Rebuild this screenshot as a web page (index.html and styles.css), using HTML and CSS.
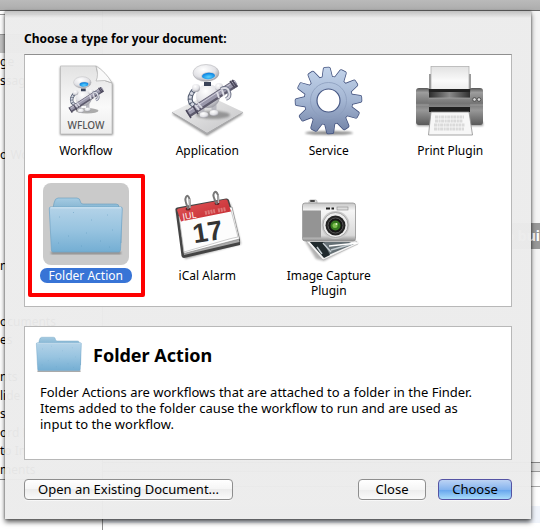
FILE: index.html
```html
<!DOCTYPE html>
<html lang="en">
<head>
    <meta charset="UTF-8">
    <meta name="viewport" content="width=device-width, initial-scale=1.0">
    <title>Automator</title>
    <link rel="stylesheet" href="styles.css">
</head>
<body>
    <!-- shared icon parts -->
    <svg class="defs" width="0" height="0" aria-hidden="true">
        <defs>
            <linearGradient id="paper" x1="0" y1="0" x2="0" y2="1">
                <stop offset="0" stop-color="#e2e2e2"/><stop offset=".6" stop-color="#fafafa"/><stop offset="1" stop-color="#ececec"/>
            </linearGradient>
            <linearGradient id="base" x1="0" y1="0" x2="1" y2="1">
                <stop offset="0" stop-color="#f2f2f2"/><stop offset="1" stop-color="#c4c4c6"/>
            </linearGradient>
            <radialGradient id="shell" cx=".4" cy=".3" r=".75">
                <stop offset="0" stop-color="#ffffff"/><stop offset=".6" stop-color="#e2e2e6"/><stop offset="1" stop-color="#96969e"/>
            </radialGradient>
            <radialGradient id="eye" cx=".5" cy=".65" r=".6">
                <stop offset="0" stop-color="#5ad4ff"/><stop offset="1" stop-color="#087fe0"/>
            </radialGradient>
            <linearGradient id="folderFront" x1="0" y1="0" x2="0" y2="1">
                <stop offset="0" stop-color="#b4d3e8"/><stop offset=".5" stop-color="#98c4e0"/><stop offset="1" stop-color="#74aed3"/>
            </linearGradient>
            <linearGradient id="folderBack" x1="0" y1="0" x2="0" y2="1">
                <stop offset="0" stop-color="#a5cbe2"/><stop offset=".4" stop-color="#6fa6c8"/>
            </linearGradient>
            <linearGradient id="steel" gradientUnits="userSpaceOnUse" x1="0" y1="10" x2="0" y2="76">
                <stop offset="0" stop-color="#c2d3ea"/><stop offset=".5" stop-color="#a3b5d2"/><stop offset="1" stop-color="#7080a4"/>
            </linearGradient>
            <linearGradient id="printer" x1="0" y1="0" x2="0" y2="1">
                <stop offset="0" stop-color="#575757"/><stop offset=".12" stop-color="#9d9d9d"/><stop offset=".4" stop-color="#757575"/><stop offset=".6" stop-color="#989898"/><stop offset="1" stop-color="#5a5a5a"/>
            </linearGradient>
            <linearGradient id="glass" x1="0" y1="0" x2="1" y2="0">
                <stop offset="0" stop-color="#2c2c2c"/><stop offset=".5" stop-color="#8a8a8a"/><stop offset="1" stop-color="#303030"/>
            </linearGradient>
            <linearGradient id="red" x1="0" y1="0" x2="1" y2="1">
                <stop offset="0" stop-color="#e2595a"/><stop offset="1" stop-color="#c2262d"/>
            </linearGradient>
            <linearGradient id="silver" x1="0" y1="0" x2="0" y2="1">
                <stop offset="0" stop-color="#c5c5c5"/><stop offset=".2" stop-color="#f6f6f6"/><stop offset=".85" stop-color="#d9d9d9"/><stop offset="1" stop-color="#8f8f8f"/>
            </linearGradient>
            <filter id="soft" x="-20%" y="-50%" width="140%" height="200%"><feGaussianBlur stdDeviation="1"/></filter>
            <path id="tooth" d="M37.5 20 39.3 10.5Q39.5 9.5 40.5 9.5H44.5Q45.5 9.5 45.7 10.5L47.5 20Z"/>
            <clipPath id="gear">
                <circle cx="42.5" cy="42.5" r="24"/>
                <use href="#tooth" transform="rotate(-3 42.5 42.5)"/>
                <use href="#tooth" transform="rotate(27 42.5 42.5)"/>
                <use href="#tooth" transform="rotate(57 42.5 42.5)"/>
                <use href="#tooth" transform="rotate(87 42.5 42.5)"/>
                <use href="#tooth" transform="rotate(117 42.5 42.5)"/>
                <use href="#tooth" transform="rotate(147 42.5 42.5)"/>
                <use href="#tooth" transform="rotate(177 42.5 42.5)"/>
                <use href="#tooth" transform="rotate(207 42.5 42.5)"/>
                <use href="#tooth" transform="rotate(237 42.5 42.5)"/>
                <use href="#tooth" transform="rotate(267 42.5 42.5)"/>
                <use href="#tooth" transform="rotate(297 42.5 42.5)"/>
                <use href="#tooth" transform="rotate(327 42.5 42.5)"/>
            </clipPath>
        </defs>
        <symbol id="robot" viewBox="0 0 86 82">
            <ellipse cx="49" cy="57" rx="17" ry="4" fill="#000" opacity=".3" filter="url(#soft)"/>
            <path d="M38 47V55M50 47V54" stroke="#b9b9c0" stroke-width="5"/>
            <ellipse cx="40" cy="57" rx="4.5" ry="3" fill="url(#shell)"/>
            <ellipse cx="50" cy="55" rx="4.5" ry="3" fill="url(#shell)"/>
            <path d="M31 31Q24 38 27 45L33 50" fill="none" stroke="#555e72" stroke-width="5"/>
            <path d="M31 31Q24 38 27 45L33 50" fill="none" stroke="#d5d8e2" stroke-width="3" stroke-dasharray="3 1"/>
            <ellipse cx="44" cy="38" rx="12" ry="12" fill="url(#shell)"/>
            <circle cx="32" cy="30" r="4" fill="url(#shell)"/>
            <circle cx="55" cy="29" r="4" fill="url(#shell)"/>
            <path d="M40 24H47V28H40Z" fill="#3a4358"/>
            <path d="M24 56 72 25" stroke="#5d5a6c" stroke-width="8"/>
            <path d="M24 55 72 24" stroke="#9a98ab" stroke-width="5"/>
            <path d="M25 53 71 23" stroke="#cfcddb" stroke-width="1"/>
            <path d="M66 23 71 30M68 22 73 29M22 52 27 60M29 48 34 56" stroke="#4b485b" stroke-width="1.5"/>
            <path d="M57 31Q64 28 65 34Q67 39 62 41" fill="none" stroke="#6e7388" stroke-width="4"/>
            <path d="M57 31Q64 28 65 34Q67 39 62 41M53 34 55 40M58 32 60 38" fill="none" stroke="#dcdce4" stroke-width="2"/>
            <path d="M31 47 35 52M34 45 38 50" stroke="#d7d7e0" stroke-width="2"/>
            <ellipse cx="42" cy="15" rx="13" ry="8.5" fill="url(#shell)" stroke="#aaaaaf" stroke-width=".5"/>
            <ellipse cx="44.500" cy="18" rx="7.500" ry="4" fill="#c7ccd4" transform="rotate(-5 44 18)"/>
            <ellipse cx="44.500" cy="18" rx="6.500" ry="3.200" fill="url(#eye)" transform="rotate(-5 44 18)"/>
        </symbol>
        <symbol id="folder" viewBox="0 0 86 82">
            <path d="M8 69H78V71H8Z" fill="#333" opacity=".55" filter="url(#soft)"/>
            <path d="M9 30 11 20Q12 15 15 15H34Q37 15 37.500 19Q38 21 40 21H73Q76 21 76 24L78 30V60H9Z" fill="url(#folderBack)" stroke="#679cbe" stroke-width=".6"/>
            <path d="M7.500 24H78Q79.500 24 79.300 26L77.500 67Q77.400 69 75.500 69H10Q8.500 69 8.400 67L6.300 26Q6.200 24 7.500 24Z" fill="url(#folderFront)" stroke="#6ea4c7" stroke-width=".7"/>
            <path d="M7.500 24.800H78" stroke="#d5e8f4" stroke-width="1"/>
            <path d="M16 34H17M30 29 31 30M48 37H49M64 32H65M25 53H26M57 58H58M69 47H70M38 63H39M15 60H16M66 64H67M43 50H44" stroke="#5793ba" opacity=".45"/>
        </symbol>
    </svg>

    <!-- document window behind the sheet -->
    <div class="window" aria-hidden="true">
        <div class="titlebar"></div>
        <div class="content">
            <div class="library">
                <div class="search"></div>
                <div class="band"></div>
                <ul class="list">
                    <li>ge</li><li>ssage</li><li></li><li></li><li></li>
                    <li>o Wo</li><li></li><li></li><li></li><li></li><li></li>
                    <li>n</li><li></li><li></li>
                    <li>ocuments</li><li>es</li><li></li>
                    <li>nts</li><li>lide P</li><li>s</li><li>ord D</li><li>to Im</li><li>ments</li>
                </ul>
                <div class="library-footer"></div>
            </div>
            <div class="canvas">
                <div class="hint">to bui</div>
                <div class="log"></div>
            </div>
        </div>
    </div>

    <main class="sheet">
        <h1>Choose a type for your document:</h1>

        <div class="types">
            <div class="type">
                <svg class="icon" viewBox="0 0 86 82">
                    <path d="M17 9H54L70 26V77H17Z" opacity=".45" filter="url(#soft)"/>
                    <path d="M17.500 8H53Q54 22 69 25V76H17.500Z" fill="url(#paper)" stroke="#b9b9b9" stroke-width=".7"/>
                    <path d="M53 8Q56 17 53 23Q62 21 69 25Q63 14 53 8Z" fill="#f9f9f9" stroke="#b0b0b0" stroke-width=".7"/>
                    <use href="#robot" x="11" y="14" width="58" height="56"/>
                    <text class="wflow" x="43" y="71">WFLOW</text>
                </svg>
                <span class="label">Workflow</span>
            </div>
            <div class="type">
                <svg class="icon" viewBox="0 0 86 82">
                    <path d="M8 56 43 78 79 56 43 40Z" opacity=".4" filter="url(#soft)"/>
                    <path d="M8 54 43 37 79 54 43 75Z" fill="url(#base)"/>
                    <path d="M8 54 43 75 79 54V55L43 77 8 55Z" fill="#a9a9ab"/>
                    <use href="#robot" width="86" height="82"/>
                </svg>
                <span class="label">Application</span>
            </div>
            <div class="type">
                <svg class="icon" viewBox="0 0 86 82">
                    <ellipse cx="43" cy="75" rx="24" ry="2" opacity=".45" filter="url(#soft)"/>
                    <g fill="#43527e" stroke="#43527e" stroke-width="1.500">
                        <use href="#tooth" transform="rotate(-3 42.5 42.5)"/>
                        <use href="#tooth" transform="rotate(27 42.5 42.5)"/>
                        <use href="#tooth" transform="rotate(57 42.5 42.5)"/>
                        <use href="#tooth" transform="rotate(87 42.5 42.5)"/>
                        <use href="#tooth" transform="rotate(117 42.5 42.5)"/>
                        <use href="#tooth" transform="rotate(147 42.5 42.5)"/>
                        <use href="#tooth" transform="rotate(177 42.5 42.5)"/>
                        <use href="#tooth" transform="rotate(207 42.5 42.5)"/>
                        <use href="#tooth" transform="rotate(237 42.5 42.5)"/>
                        <use href="#tooth" transform="rotate(267 42.5 42.5)"/>
                        <use href="#tooth" transform="rotate(297 42.5 42.5)"/>
                        <use href="#tooth" transform="rotate(327 42.5 42.5)"/>
                        <circle cx="42.5" cy="42.5" r="24"/>
                    </g>
                    <rect x="5" y="5" width="76" height="76" fill="url(#steel)" clip-path="url(#gear)"/>
                    <circle cx="42.5" cy="42.5" r="18" fill="none" stroke="#8c9dbd" stroke-width=".8"/>
                    <circle cx="42.5" cy="42.5" r="11.5" fill="#fff" stroke="#495a86" stroke-width="1.2"/>
                </svg>
                <span class="label">Service</span>
            </div>
            <div class="type">
                <svg class="icon" viewBox="0 0 86 82">
                    <rect x="22" y="16" width="42" height="18" fill="#9a9a9a"/>
                    <rect x="24" y="8.500" width="38" height="24" fill="url(#paper)" stroke="#aaa" stroke-width=".7"/>
                    <path d="M10 64H76V68H10Z" opacity=".4" filter="url(#soft)"/>
                    <rect x="9" y="30" width="14" height="37" rx="3" fill="url(#printer)"/>
                    <rect x="62" y="30" width="14" height="37" rx="3" fill="url(#printer)"/>
                    <rect x="21" y="31" width="43" height="36" fill="url(#printer)"/>
                    <rect x="22" y="31" width="41" height="9" fill="url(#glass)"/>
                    <path d="M22 31H63V34H22Z" fill="#222"/>
                    <path d="M22 49H63V54H22Z" fill="#202020"/>
                    <path d="M22 40H63M9 47H22M63 47H76" stroke="#aaa" stroke-width=".7"/>
                    <circle cx="67.500" cy="41.500" r="1.800" fill="#ddd" stroke="#333" stroke-width=".7"/>
                    <circle cx="72" cy="41.500" r="1.800" fill="#ddd" stroke="#333" stroke-width=".7"/>
                    <path d="M24 54H62L65.500 77H21.500Z" fill="#f7f7f7" stroke="#8f8f8f" stroke-width=".8"/>
                    <path d="M28 59H57M28 63H56M27 67H58M27 71H57" stroke="#dadada" stroke-width="3" stroke-dasharray="3 .6 2 .5"/>
                </svg>
                <span class="label">Print Plugin</span>
            </div>
            <div class="type selected">
                <svg class="icon" viewBox="0 0 86 82"><use href="#folder" width="86" height="82"/></svg>
                <span class="label">Folder Action</span>
            </div>
            <div class="type">
                <svg class="icon" viewBox="0 0 86 82">
                    <path d="M12 27 66 20 77 61 21 76Z" opacity=".4" filter="url(#soft)"/>
                    <path d="M11.500 27Q11 25 13 24.500L62 15.500Q64 15 65 17L76 57V62L20 75Q18 75 17.500 73Z" fill="#444"/>
                    <path d="M15 31 68 24 75.500 59 20 72Z" fill="#aaa"/>
                    <path d="M15 31 68 24 75.500 56 20 70.500Z" fill="#fff" stroke="#777" stroke-width=".6"/>
                    <path d="M20 69 58 58Q68 55 74 54L67 27 15 33Z" fill="#fdfdfd" stroke="#aaa" stroke-width=".6"/>
                    <path d="M13 27Q13 26 14.500 25.500L61 16.500Q63 16 63.500 17.500L67 28.500 17 38.500Z" fill="url(#red)"/>
                    <path d="M41 30 51 28M54 27.500 62 26" stroke="#dd7777" stroke-width="4" stroke-dasharray="2 .8"/>
                    <ellipse cx="24" cy="26" rx="2.500" ry="1.500" fill="#642025"/>
                    <ellipse cx="53" cy="20.500" rx="2.500" ry="1.500" fill="#642025"/>
                    <path d="M24.500 26Q20 17 22 14Q24 11 25.500 16L26 25M53 21Q48 13 50 10Q52 7 54 12L54.500 20" fill="none" stroke="#777" stroke-width="2"/>
                    <path d="M25.500 16 26 25M54 12 54.500 20" stroke="#ddd" stroke-width=".7"/>
                    <text class="month" x="19" y="37" transform="rotate(-9 19 37)">JUL</text>
                    <text class="day" x="45" y="58" transform="rotate(-9 45 58)">17</text>
                </svg>
                <span class="label">iCal Alarm</span>
            </div>
            <div class="type">
                <svg class="icon" viewBox="0 0 86 82">
                    <path d="M19 58H69L72 60 38 78 30 76Z" opacity=".3" filter="url(#soft)"/>
                    <path d="M20 58 70 58 72 61 37 77Z" fill="#f4f4f4" stroke="#aaa" stroke-width=".6"/>
                    <path d="M24 59 63 59 68 61 38 74Z" fill="#657075"/>
                    <path d="M24 59H38L41 66 44 72 38 75Z" fill="#202a2d"/>
                    <path d="M37 60 45 69M31 64 36 71M45 67 66 61" stroke="#c2cbd0" stroke-width="1.500"/>
                    <path d="M43 63 72 60" stroke="#fff" stroke-width="1.500"/>
                    <rect x="23" y="17" width="8" height="6" rx="1.500" fill="#ddd" stroke="#999" stroke-width=".6"/>
                    <rect x="24" y="17" width="5" height="2" rx="1" fill="#444"/>
                    <rect x="16.500" y="20" width="53" height="38" rx="2.500" fill="url(#silver)" stroke="#929292" stroke-width=".8"/>
                    <rect x="17" y="27.500" width="18" height="27" fill="#8d8d8d"/>
                    <path d="M17 29H35M17 31H35M17 33H35M17 35H35M17 37H35M17 39H35M17 41H35M17 43H35M17 45H35M17 47H35M17 49H35M17 51H35M17 53H35" stroke="#a5a5a5" stroke-width=".7"/>
                    <path d="M40 25.500H44M45.500 25.500H48" stroke="#222" stroke-width="2"/>
                    <rect x="51" y="24" width="11" height="3" fill="#ddd" stroke="#888" stroke-width=".6"/>
                    <circle cx="49.500" cy="42" r="14" fill="#cacaca"/>
                    <circle cx="49.500" cy="42" r="12.500" fill="#eee" stroke="#999" stroke-width=".8"/>
                    <circle cx="49.500" cy="42.500" r="10" fill="#222"/>
                    <circle cx="49.500" cy="42.500" r="7.500" fill="#151515" stroke="#666" stroke-width=".8"/>
                    <circle cx="49.500" cy="42.500" r="5" fill="#367a20"/>
                    <circle cx="49" cy="42.500" r="2.500" fill="#7dc14e"/>
                    <circle cx="50.500" cy="41" r="1" fill="#e3f6c8"/>
                </svg>
                <span class="label">Image Capture Plugin</span>
            </div>
        </div>

        <section class="description">
            <div class="heading">
                <svg class="small-icon" viewBox="5 13 76 60"><use href="#folder" width="86" height="82"/></svg>
                <h2>Folder Action</h2>
            </div>
            <p>Folder Actions are workflows that are attached to a folder in the Finder. Items added to the folder cause the workflow to run and are used as input to the workflow.</p>
        </section>

        <div class="buttons">
            <button class="open" type="button">Open an Existing Document...</button>
            <button class="close" type="button">Close</button>
            <button class="choose" type="button">Choose</button>
        </div>
    </main>
</body>
</html>
```
FILE: styles.css
```css
* { box-sizing: border-box; }
body {
    position: relative;
    min-height: 100vh;
    margin: 0;
    padding: 11px 9px 11px 5px;
    overflow-x: hidden;
    background: #fff;
    color: #000;
    font-family: "Noto Sans", "Open Sans", sans-serif;
    font-size: 12px;
}
.defs { position: absolute; }

/* window behind */
.window {
    position: absolute;
    inset: 0;
    display: flex;
    flex-direction: column;
    overflow: hidden;
}
.titlebar {
    height: 11px;
    background: linear-gradient(#bababa, #adadad);
    border-bottom: 1px solid #666;
}
.content { flex: 1; display: flex; }
.library {
    display: flex;
    flex-direction: column;
    width: 103px;
    border-right: 1px solid #8e8e8e;
}
.search { height: 21px; margin-top: 3px; border-top: 1px solid #999; border-bottom: 1px solid #999; }
.band { height: 18px; background: #c2c2c2; }
.list {
    flex: 1;
    display: grid;
    grid-auto-rows: 1fr;
    align-items: center;
    margin: 0;
    padding: 0;
    list-style: none;
    line-height: 16px;
    white-space: nowrap;
}
.library-footer { height: 51px; border-top: 1px solid #888; }
.canvas {
    flex: 1;
    display: flex;
    flex-direction: column;
    background: #f5f5f5;
}
.hint {
    height: 26px;
    margin: 212px 0 auto 360px;
    background: #999;
    color: #fff;
    font-size: 14px;
    font-weight: bold;
    line-height: 26px;
    text-align: right;
}
.log {
    height: 68px;
    border-top: 1px solid #888;
    background: linear-gradient(#e3e3e3 8px, #999 8px, #999 9px, #f5f5f5 9px, #fff 23px, #aaa 23px, #aaa 24px, #fff 24px, #fff 43px, #f0f4fb 43px, #f0f4fb 60px, #fff 60px);
}

/* sheet */
.sheet {
    position: relative;
    padding: 18px 19px 19px;
    background: linear-gradient(rgba(190, 190, 190, .97), rgba(236, 236, 236, .97) 7px);
    box-shadow: 0 3px 5px rgba(0, 0, 0, .65), 0 0 2px rgba(0, 0, 0, .4);
}
h1 {
    margin: 0 0 6px;
    font-size: 12px;
    line-height: 19px;
}
.types {
    display: grid;
    grid-template-columns: repeat(4, 1fr);
    row-gap: 25px;
    padding: 3px 0 8px;
    background: #fff;
    border: 1px solid #b8b8b8;
    border-top-color: #8f8f8f;
}
.type {
    position: relative;
    display: flex;
    flex-direction: column;
    align-items: center;
    gap: 3px;
}
.icon {
    width: 86px;
    height: 82px;
    border-radius: 8px;
}
.label {
    max-width: 116px;
    padding: 0 9px;
    border-radius: 7px;
    line-height: 15px;
    text-align: center;
}
.selected .icon { background: #cacaca; }
.selected .label { background: #3874d6; color: #fff; }
.selected::after {
    content: "";
    position: absolute;
    inset: -9px 2px 1px 3px;
    border: 4px solid #fe0000;
    border-radius: 2px;
}
.wflow { font-size: 10px; font-weight: 500; fill: #555; text-anchor: middle; }
.month { font-size: 9px; fill: #fff; }
.day { font: bold 27px "Liberation Sans", sans-serif; fill: #333; text-anchor: middle; }

.description {
    min-height: 134px;
    margin-top: 19px;
    padding: 9px 15px;
    background: #fff;
    border: 1px solid #b8b8b8;
}
.heading { display: flex; align-items: center; gap: 10px; margin-left: -5px; }
.small-icon { width: 48px; height: 37px; }
h2 { margin: 0; font-size: 18px; line-height: 24px; }
p { margin: 11px 12px 0 0; font-size: 13px; line-height: 16px; }

.buttons { display: flex; gap: 12px; margin-top: 19px; }
button {
    height: 21px;
    padding: 0 13px;
    border: 1px solid #8e8e8e;
    border-radius: 4px;
    background: linear-gradient(#fff, #f5f5f5 50%, #ececec 50%, #fafafa);
    box-shadow: 0 1px 0 rgba(255, 255, 255, .6);
    color: #000;
    font: inherit;
    font-size: 13px;
    line-height: 17px;
}
.close { min-width: 68px; margin-left: auto; }
.choose {
    min-width: 74px;
    border-color: #5553a4;
    background: linear-gradient(#bcd3f4, #86b4ee 50%, #62a2ec 50%, #a9dcfa);
}
```
